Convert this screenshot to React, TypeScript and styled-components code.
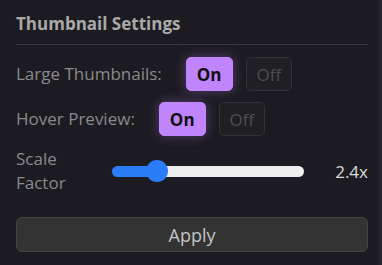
import React, { useState } from "react";
import styled, { createGlobalStyle } from "styled-components";

const Global = createGlobalStyle`
  html, body { margin: 0; padding: 0; background: #1c1b21; }
  body { font-family: "Open Sans", "Noto Sans", sans-serif; }
  * { box-sizing: border-box; }
`;

const Panel = styled.div`
  width: 382px;
  height: 265px;
  background: #1c1b21;
  border-right: 4px solid #232227;
  padding: 12px 10px 12px 16px;
  display: flex;
  flex-direction: column;
`;

const Title = styled.h2`
  margin: 0;
  font-size: 17px;
  font-weight: 700;
  color: #a9a9a9;
  line-height: 24px;
  padding-bottom: 8px;
  border-bottom: 1px solid #39383d;
`;

const Body = styled.div`
  display: flex;
  flex-direction: column;
  gap: 11px;
  padding-top: 12px;
`;

const Row = styled.div`
  display: flex;
  align-items: center;
`;

const Label = styled.span<{ $width?: number }>`
  font-size: 17px;
  line-height: 24px;
  color: #8a8a8a;
  margin-right: 24px;
  ${(p) => (p.$width ? `width: ${p.$width}px; margin-right: 16px; flex: 0 0 auto;` : "")}
`;

const Toggle = styled.div`
  display: flex;
  gap: 13px;
`;

const ToggleButton = styled.button<{ $active?: boolean }>`
  height: 34px;
  min-width: 45px;
  padding: 0 10px;
  border-radius: 5px;
  font-family: inherit;
  font-size: 17px;
  cursor: pointer;
  border: 1px solid ${(p) => (p.$active ? "#c084fc" : "#333237")};
  background: ${(p) => (p.$active ? "#c084fc" : "#201f24")};
  color: ${(p) => (p.$active ? "#111" : "#4e4e50")};
  font-weight: ${(p) => (p.$active ? 700 : 400)};
  box-shadow: ${(p) => (p.$active ? "0 0 12px rgba(192,132,252,0.35)" : "none")};
`;

const Slider = styled.input<{ $pct: number }>`
  -webkit-appearance: none;
  appearance: none;
  flex: 1;
  margin: 0;
  height: 22px;
  background: transparent;
  &::-webkit-slider-runnable-track {
    height: 11px;
    border-radius: 6px;
    background: linear-gradient(
      to right,
      #2a7cf8 0%,
      #2a7cf8 ${(p) => p.$pct}%,
      #efefef ${(p) => p.$pct}%,
      #efefef 100%
    );
  }
  &::-webkit-slider-thumb {
    -webkit-appearance: none;
    width: 22px;
    height: 22px;
    border-radius: 50%;
    background: #2a7cf8;
    margin-top: -5.5px;
    border: none;
  }
`;

const Value = styled.span`
  min-width: 48px;
  margin-left: 16px;
  text-align: right;
  font-size: 17px;
  color: #dcdcdc;
`;

const ApplyButton = styled.button`
  margin-top: 22px;
  height: 35px;
  width: 100%;
  background: #333333;
  border: 1px solid #444446;
  border-radius: 6px;
  color: #c4c4c4;
  font-family: inherit;
  font-size: 18px;
  cursor: pointer;
`;

function ToggleGroup({ value, onChange }: { value: boolean; onChange: (v: boolean) => void }) {
  return (
    <Toggle>
      <ToggleButton $active={value} onClick={() => onChange(true)}>On</ToggleButton>
      <ToggleButton $active={!value} onClick={() => onChange(false)}>Off</ToggleButton>
    </Toggle>
  );
}

export default function App() {
  const [large, setLarge] = useState(true);
  const [hover, setHover] = useState(true);
  const [scale, setScale] = useState(2.4);
  const min = 1;
  const max = 8;
  const frac = (scale - min) / (max - min);
  const pct = ((11 + frac * (192 - 22)) / 192) * 100;
  return (
    <>
      <Global />
      <Panel>
        <Title>Thumbnail Settings</Title>
        <Body>
          <Row>
            <Label>Large Thumbnails:</Label>
            <ToggleGroup value={large} onChange={setLarge} />
          </Row>
          <Row>
            <Label>Hover Preview:</Label>
            <ToggleGroup value={hover} onChange={setHover} />
          </Row>
          <Row>
            <Label $width={80}>Scale Factor</Label>
            <Slider
              type="range"
              min={min}
              max={max}
              step={0.1}
              value={scale}
              $pct={pct}
              onChange={(e) => setScale(parseFloat(e.target.value))}
            />
            <Value>{scale.toFixed(1)}x</Value>
          </Row>
        </Body>
        <ApplyButton>Apply</ApplyButton>
      </Panel>
    </>
  );
}
